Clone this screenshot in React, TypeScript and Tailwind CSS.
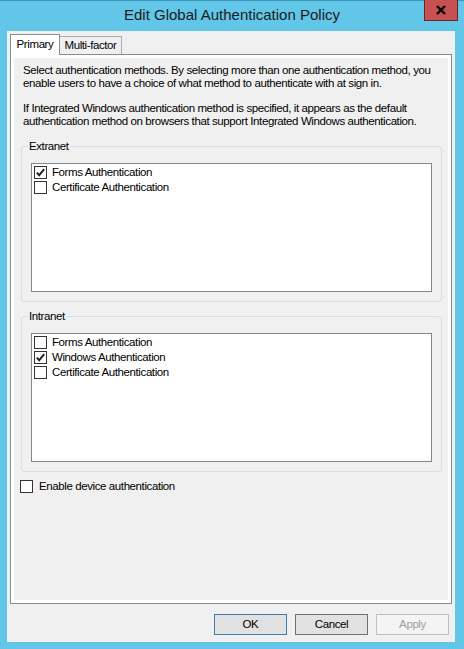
const Check = ({ checked }: { checked: boolean }) => (
  <span className="w-[13px] h-[13px] shrink-0 border border-[#333333] bg-white flex items-center justify-center">
    {checked && (
      <svg width="11" height="11" viewBox="0 0 11 11">
        <path d="M1.8 5.6 L4.2 8.2 L9.2 2.2" fill="none" stroke="#222" strokeWidth="2" />
      </svg>
    )}
  </span>
);

const Group = ({ label, items }: { label: string; items: { name: string; checked: boolean }[] }) => (
  <fieldset className="ml-[7px] mr-[6px] border border-[#d5dfe5] rounded-[3px] px-[9px] pb-[9px] pt-[10px]">
    <legend className="-ml-[4px] px-[2px] leading-[13px]">{label}</legend>
    <div className="h-[129px] border border-[#828790] bg-white pl-[2px] pt-[1px]">
      {items.map((it) => (
        <div key={it.name} className="h-[15px] flex items-center gap-[5px]">
          <Check checked={it.checked} />
          <span>{it.name}</span>
        </div>
      ))}
    </div>
  </fieldset>
);

const App = () => {
  return (
    <div className="w-[464px] h-[649px] bg-[#62c6e9] border-t border-[#3f97bd] flex flex-col font-['Liberation_Sans',Arial,sans-serif] text-[11.5px] tracking-[-0.4px] text-black">
      {/* title bar */}
      <div className="h-[30px] flex">
        <div className="w-[40px]" />
        <div className="flex-1 flex items-center justify-center text-[15px] tracking-normal text-[#1b1b1b] pb-[1px]">
          Edit Global Authentication Policy
        </div>
        <div className="w-[40px] pr-[6px] -mt-[1px]">
          <div className="w-[34px] h-[21px] bg-[#c75050] border border-[#5c2a2a] border-t-0 flex items-center justify-center">
            <svg width="12" height="10" viewBox="0 0 12 10">
              <path d="M2 1 L10 9 M10 1 L2 9" stroke="#000" strokeWidth="2.4" />
            </svg>
          </div>
        </div>
      </div>

      {/* client */}
      <div className="ml-[7px] mr-[9px] h-[611px] bg-[#f0f0f0] px-[3px] pt-[3px] flex flex-col">
        {/* tabs */}
        <div className="h-[20px] flex items-end">
          <div className="h-[21px] w-[50px] bg-white border border-b-0 border-[#898c95] flex items-center justify-center -mb-[1px] relative z-10">
            Primary
          </div>
          <div className="h-[18px] w-[62px] bg-[#f0f0f0] border border-l-0 border-b-0 border-[#acacac] flex items-center justify-center">
            Multi-factor
          </div>
        </div>

        {/* panel */}
        <div className="h-[550px] border border-[#898c95] bg-white p-[3px]">
          <div className="h-full bg-[#f0f0f0] pt-[6px] leading-[13px]">
            <p className="pl-[9px] whitespace-nowrap">
              Select authentication methods. By selecting more than one authentication method, you
              <br />
              enable users to have a choice of what method to authenticate with at sign in.
            </p>
            <p className="pl-[9px] mt-[12px] whitespace-nowrap">
              If Integrated Windows authentication method is specified, it appears as the default
              <br />
              authentication method on browsers that support Integrated Windows authentication.
            </p>

            <div className="mt-[12px]">
              <Group
                label="Extranet"
                items={[
                  { name: "Forms Authentication", checked: true },
                  { name: "Certificate Authentication", checked: false },
                ]}
              />
            </div>
            <div className="mt-[8px]">
              <Group
                label="Intranet"
                items={[
                  { name: "Forms Authentication", checked: false },
                  { name: "Windows Authentication", checked: true },
                  { name: "Certificate Authentication", checked: false },
                ]}
              />
            </div>

            <div className="mt-[8px] ml-[6px] flex items-center gap-[6px]">
              <Check checked={false} />
              <span>Enable device authentication</span>
            </div>
          </div>
        </div>

        {/* buttons */}
        <div className="mt-[10px] flex justify-end gap-[8px] pr-[3px]">
          <button className="w-[73px] h-[21px] bg-[#e1e1e1] border border-[#3c7fb1]">OK</button>
          <button className="w-[73px] h-[21px] bg-[#e1e1e1] border border-[#707070]">Cancel</button>
          <button className="w-[73px] h-[21px] bg-[#f4f4f4] border border-[#bfbfbf] text-[#a0a0a0]">Apply</button>
        </div>
      </div>
    </div>
  );
};

export default App;
